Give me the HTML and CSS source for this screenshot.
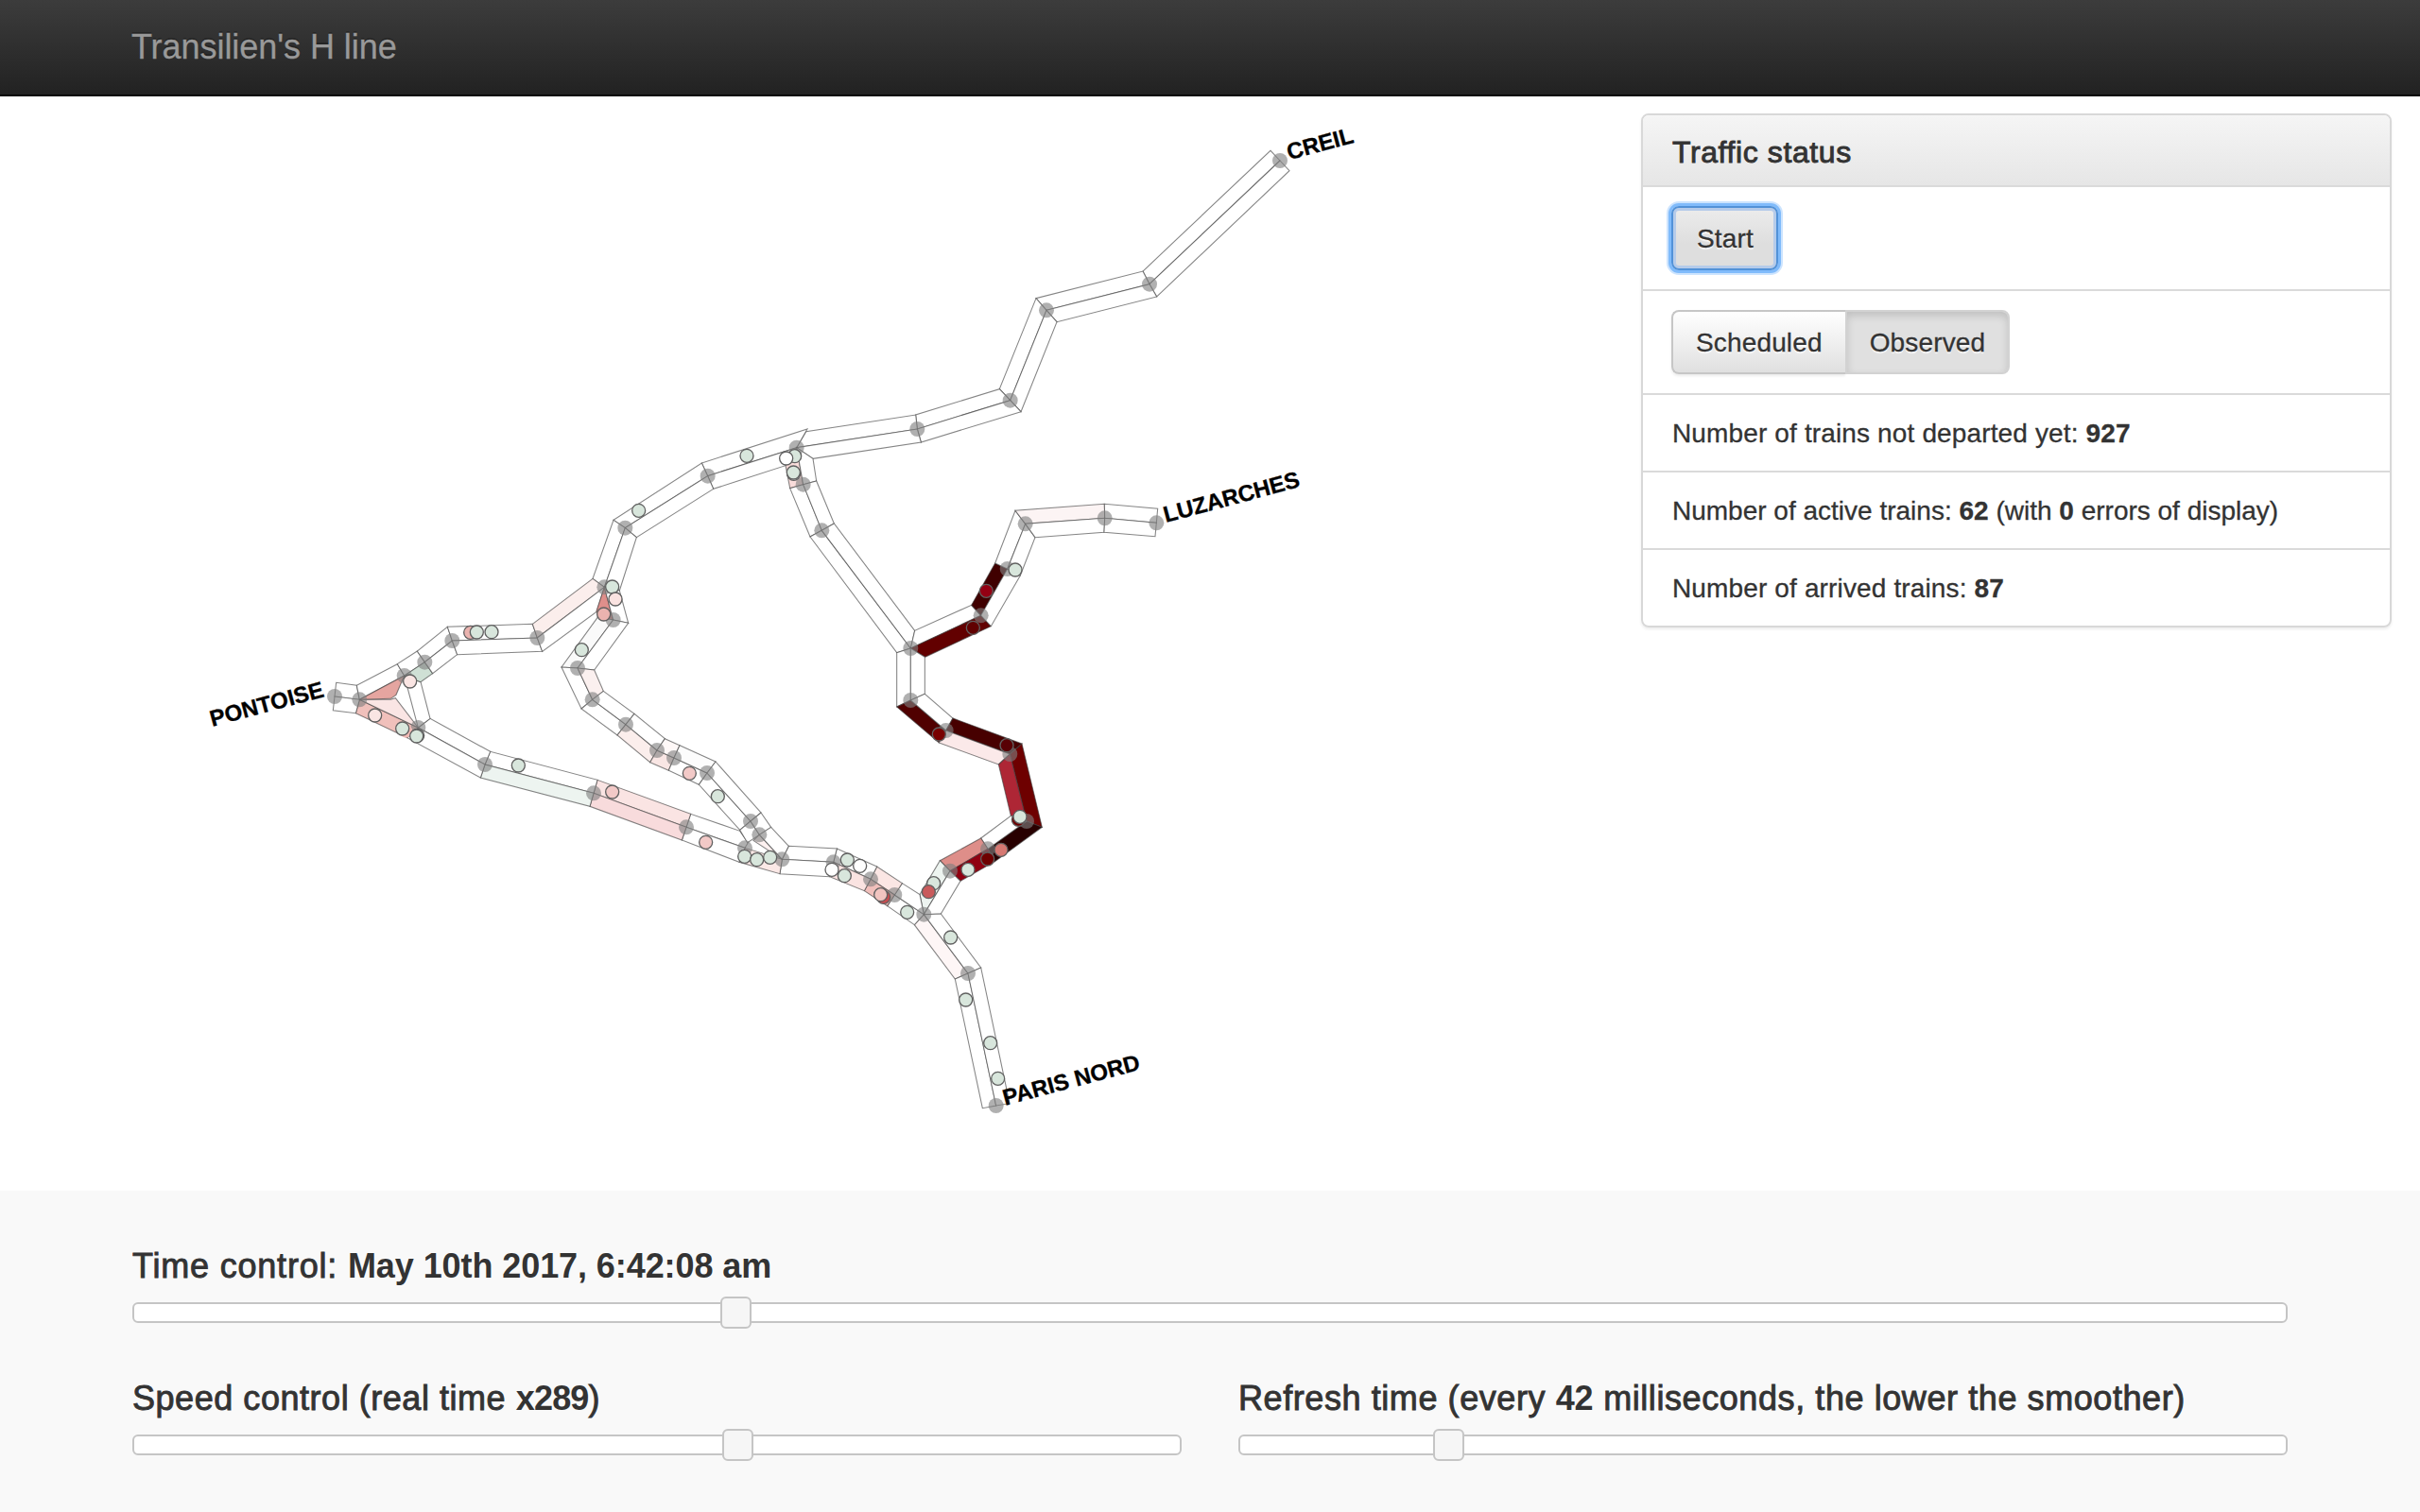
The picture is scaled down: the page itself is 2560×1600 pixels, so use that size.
FILE: index.html
```html
<!DOCTYPE html>
<html lang="en">
<head>
<meta charset="utf-8">
<title>Transilien's H line</title>
<link rel="stylesheet" href="styles.css">
</head>
<body>
<header class="navbar"><a class="brand">Transilien's H line</a></header>

<main class="content">
<svg class="map" viewBox="0 306 5208 3474">
  <!-- one polygon per direction between two stations -->
  <g class="sections">
    <polygon points="4062,510 4032,478 3627,861 3648,902"/>
    <polygon points="4062,510 4092,542 3671,942 3648,902"/>
    <polygon points="3648,902 3627,861 3288,947 3321,985"/>
    <polygon points="3648,902 3671,942 3354,1022 3321,985"/>
    <polygon points="3321,985 3288,947 3172,1235 3206,1271"/>
    <polygon points="3321,985 3354,1022 3240,1307 3206,1271"/>
    <polygon points="3206,1271 3172,1235 2906,1317 2911,1362"/>
    <polygon points="3206,1271 3240,1307 2923,1404 2911,1362"/>
    <polygon points="2911,1362 2906,1317 2558,1370 2528,1421"/>
    <polygon points="2911,1362 2923,1404 2580,1456 2528,1421"/>
    <polygon points="2528,1421 2562,1362 2227,1470 2246,1511"/>
    <polygon points="2528,1421 2493,1478 2264,1552 2246,1511"/>
    <polygon points="2246,1511 2227,1470 1947,1651 1984,1676"/>
    <polygon points="2246,1511 2264,1552 2020,1706 1984,1676"/>
    <polygon points="1984,1676 1947,1651 1881,1837 1918,1864"/>
    <polygon points="1984,1676 2020,1706 1966,1875 1918,1864"/>
    <polygon points="2528,1421 2493,1478 2507,1550 2549,1538" fill="#f9dcda"/>
    <polygon points="2528,1421 2580,1456 2591,1527 2549,1538"/>
    <polygon points="2549,1538 2507,1550 2571,1704 2608,1684"/>
    <polygon points="2549,1538 2591,1527 2647,1662 2608,1684"/>
    <polygon points="2608,1684 2571,1704 2846,2072 2890,2058"/>
    <polygon points="2608,1684 2647,1662 2903,2002 2890,2058"/>
    <polygon points="2890,2058 2903,2002 3083,1921 3113,1954"/>
    <polygon points="2890,2058 2936,2086 3145,1988 3113,1954" fill="#620000"/>
    <polygon points="3113,1954 3083,1921 3158,1788 3197,1806" fill="#400000"/>
    <polygon points="3113,1954 3145,1988 3238,1827 3197,1806"/>
    <polygon points="3197,1806 3158,1788 3222,1621 3254,1663"/>
    <polygon points="3197,1806 3238,1827 3285,1706 3254,1663"/>
    <polygon points="3254,1663 3222,1621 3505,1600 3506,1645" fill="#fcf4f4"/>
    <polygon points="3254,1663 3285,1706 3504,1690 3506,1645"/>
    <polygon points="3506,1645 3505,1600 3674,1615 3670,1660"/>
    <polygon points="3506,1645 3504,1690 3666,1703 3670,1660"/>
    <polygon points="2890,2058 2846,2072 2846,2244 2890,2223"/>
    <polygon points="2890,2058 2935,2086 2935,2203 2890,2223"/>
    <polygon points="2890,2223 2846,2244 2980,2358 3002,2319" fill="#500000"/>
    <polygon points="2890,2223 2935,2203 3024,2280 3002,2319"/>
    <polygon points="3002,2319 3024,2280 3243,2361 3205,2394" fill="#470000"/>
    <polygon points="3002,2319 2980,2358 3169,2427 3205,2394" fill="#fbe9e9"/>
    <polygon points="3205,2394 3243,2361 3307,2626 3258,2607" fill="#6e0000"/>
    <polygon points="3205,2394 3169,2427 3208,2590 3258,2607" fill="#ae2635"/>
    <polygon points="3258,2607 3307,2626 3157,2735 3135,2695" fill="#280000"/>
    <polygon points="3258,2607 3208,2590 3113,2661 3135,2695"/>
    <polygon points="3135,2695 3113,2661 2983,2732 3015,2765" fill="#de8e89"/>
    <polygon points="3135,2695 3157,2735 3048,2797 3015,2765" fill="#900011"/>
    <polygon points="3015,2765 2983,2732 2919,2840 2932,2903" fill="#edf4f0"/>
    <polygon points="3015,2765 3048,2797 2986,2901 2932,2903"/>
    <polygon points="2932,2903 2902,2936 3031,3108 3072,3090" fill="#fef6f6"/>
    <polygon points="2932,2903 2986,2901 3113,3072 3072,3090"/>
    <polygon points="3072,3090 3031,3108 3118,3518 3161,3510"/>
    <polygon points="3072,3090 3113,3072 3204,3503 3161,3510"/>
    <polygon points="2932,2903 2902,2936 2816,2876 2839,2841"/>
    <polygon points="2932,2903 2919,2840 2863,2804 2839,2841"/>
    <polygon points="2839,2841 2863,2804 2783,2751 2763,2791" fill="#fbe6e4"/>
    <polygon points="2839,2841 2816,2876 2743,2828 2763,2791" fill="#f1bfbb"/>
    <polygon points="2763,2791 2783,2751 2656,2694 2645,2737"/>
    <polygon points="2763,2791 2743,2828 2633,2783 2645,2737" fill="#fae3e1"/>
    <polygon points="2645,2737 2656,2694 2503,2686 2482,2728"/>
    <polygon points="2645,2737 2633,2783 2475,2774 2482,2728"/>
    <polygon points="2482,2728 2475,2774 2346,2737 2364,2692" fill="#fbe8e6"/>
    <polygon points="2364,2692 2374,2675 2348,2638 2192,2584 2178,2626"/>
    <polygon points="2364,2692 2346,2737 2164,2667 2178,2626"/>
    <polygon points="2178,2626 2192,2584 1896,2476 1884,2518" fill="#fae4e3"/>
    <polygon points="2178,2626 2164,2667 1872,2560 1884,2518" fill="#f8dbdc"/>
    <polygon points="1884,2518 1896,2476 1556,2386 1539,2427"/>
    <polygon points="1884,2518 1872,2560 1525,2469 1539,2427" fill="#edf4f0"/>
    <polygon points="1539,2427 1556,2386 1365,2281 1327,2310"/>
    <polygon points="1539,2427 1525,2469 1292,2342 1327,2310"/>
    <polygon points="1327,2310 1292,2342 1129,2264 1141,2221" fill="#f0c0bb"/>
    <polygon points="1283,2145 1335,2165 1365,2281 1327,2310"/>
    <polygon points="1327,2310 1255,2216 1240,2221 1141,2221" fill="#fae5e4"/>
    <polygon points="1141,2221 1132,2176 1067,2167 1062,2211"/>
    <polygon points="1141,2221 1129,2264 1057,2255 1062,2211"/>
    <polygon points="1141,2221 1132,2176 1261,2108 1283,2145"/>
    <polygon points="1141,2221 1240,2218 1257,2206 1283,2145" fill="#e5a5a0"/>
    <polygon points="1283,2145 1261,2108 1324,2067 1348,2102"/>
    <polygon points="1283,2145 1335,2165 1373,2138 1348,2102" fill="#cfe0d5"/>
    <polygon points="1348,2102 1324,2067 1420,1990 1435,2034"/>
    <polygon points="1348,2102 1373,2138 1451,2078 1435,2034"/>
    <polygon points="1435,2034 1420,1990 1690,1981 1705,2025"/>
    <polygon points="1435,2034 1451,2078 1721,2068 1705,2025"/>
    <polygon points="1705,2025 1690,1981 1881,1837 1918,1864" fill="#fbeeec"/>
    <polygon points="1705,2025 1721,2068 1893,1942 1918,1864"/>
    <polygon points="1918,1864 1893,1940 1898,1958 1946,1968" fill="#df8f8b"/>
    <polygon points="1918,1864 1966,1875 1994,1978 1946,1968"/>
    <polygon points="1946,1968 1898,1958 1782,2118 1833,2121" fill="#fafafa"/>
    <polygon points="1946,1968 1994,1978 1886,2127 1833,2121"/>
    <polygon points="1833,2121 1782,2118 1845,2250 1880,2221"/>
    <polygon points="1833,2121 1886,2127 1915,2194 1880,2221" fill="#fbf0ef"/>
    <polygon points="1880,2221 1845,2250 1959,2334 1986,2300"/>
    <polygon points="1880,2221 1915,2194 2013,2266 1986,2300"/>
    <polygon points="1986,2300 1959,2334 2063,2420 2085,2382" fill="#fbeeec"/>
    <polygon points="1986,2300 2013,2266 2110,2345 2085,2382"/>
    <polygon points="2085,2382 2063,2420 2122,2446 2139,2406" fill="#f9e6e4"/>
    <polygon points="2085,2382 2110,2345 2157,2366 2139,2406" fill="#fef8f7"/>
    <polygon points="2139,2406 2122,2446 2218,2491 2244,2454"/>
    <polygon points="2139,2406 2157,2366 2271,2418 2244,2454" fill="#fcfcfc"/>
    <polygon points="2244,2454 2218,2491 2348,2635 2382,2607"/>
    <polygon points="2244,2454 2271,2418 2415,2580 2382,2607"/>
    <polygon points="2382,2607 2348,2635 2372,2675 2410,2650"/>
    <polygon points="2382,2607 2415,2580 2447,2626 2410,2650"/>
    <polygon points="2410,2650 2391,2668 2482,2728" fill="#fdf1f0"/>
    <polygon points="2410,2650 2447,2626 2503,2686 2482,2728"/>
  </g>
  <g class="stations">
    <circle cx="4062" cy="510" r="24"/><circle cx="3648" cy="902" r="24"/><circle cx="3321" cy="985" r="24"/>
    <circle cx="3206" cy="1271" r="24"/><circle cx="2911" cy="1362" r="24"/><circle cx="2528" cy="1421" r="24"/>
    <circle cx="2246" cy="1511" r="24"/><circle cx="1984" cy="1676" r="24"/><circle cx="1918" cy="1864" r="24"/>
    <circle cx="2549" cy="1538" r="24"/><circle cx="2608" cy="1684" r="24"/><circle cx="2890" cy="2058" r="24"/>
    <circle cx="3113" cy="1954" r="24"/><circle cx="3197" cy="1806" r="24"/><circle cx="3254" cy="1663" r="24"/>
    <circle cx="3506" cy="1645" r="24"/><circle cx="3670" cy="1660" r="24"/><circle cx="2890" cy="2223" r="24"/>
    <circle cx="3002" cy="2319" r="24"/><circle cx="3205" cy="2394" r="24"/><circle cx="3258" cy="2607" r="24"/>
    <circle cx="3135" cy="2695" r="24"/><circle cx="3015" cy="2765" r="24"/><circle cx="2932" cy="2903" r="24"/>
    <circle cx="3072" cy="3090" r="24"/><circle cx="3161" cy="3510" r="24"/><circle cx="2839" cy="2841" r="24"/>
    <circle cx="2763" cy="2791" r="24"/><circle cx="2645" cy="2737" r="24"/><circle cx="2482" cy="2728" r="24"/>
    <circle cx="2364" cy="2692" r="24"/><circle cx="2178" cy="2626" r="24"/><circle cx="1884" cy="2518" r="24"/>
    <circle cx="1539" cy="2427" r="24"/><circle cx="1327" cy="2310" r="24"/><circle cx="1141" cy="2221" r="24"/>
    <circle cx="1062" cy="2211" r="24"/><circle cx="1283" cy="2145" r="24"/><circle cx="1348" cy="2102" r="24"/>
    <circle cx="1435" cy="2034" r="24"/><circle cx="1705" cy="2025" r="24"/><circle cx="1946" cy="1968" r="24"/>
    <circle cx="1833" cy="2121" r="24"/><circle cx="1880" cy="2221" r="24"/><circle cx="1986" cy="2300" r="24"/>
    <circle cx="2085" cy="2382" r="24"/><circle cx="2139" cy="2406" r="24"/><circle cx="2244" cy="2454" r="24"/>
    <circle cx="2382" cy="2607" r="24"/><circle cx="2410" cy="2650" r="24"/>
  </g>
  <g class="trains">
    <circle cx="2370" cy="1447" r="21"/><circle cx="2522" cy="1448" r="21"/>
    <circle cx="2495" cy="1455" r="21" fill="#fff"/><circle cx="2519" cy="1504" r="21" fill="#fff"/>
    <circle cx="2518" cy="1500" r="21"/><circle cx="3222" cy="1809" r="21"/>
    <circle cx="3130" cy="1876" r="21" fill="#940013"/><circle cx="3088" cy="1993" r="21" fill="#600000"/>
    <circle cx="2027" cy="1621" r="21"/><circle cx="1943" cy="1863" r="21"/>
    <circle cx="1953" cy="1902" r="21" fill="#fae3e1"/><circle cx="1916" cy="1950" r="21" fill="#eab3af"/>
    <circle cx="1846" cy="2063" r="21"/><circle cx="1493" cy="2008" r="21" fill="#eab3af"/>
    <circle cx="1513" cy="2007" r="21"/><circle cx="1560" cy="2006" r="21"/>
    <circle cx="1301" cy="2163" r="21" fill="#fae5e3"/><circle cx="1190" cy="2271" r="21" fill="#fae5e3"/>
    <circle cx="1288" cy="2321" r="21" fill="#f0b9b4" stroke="none"/><circle cx="1277" cy="2313" r="21"/>
    <circle cx="1325" cy="2335" r="21"/><circle cx="1322" cy="2337" r="21"/>
    <circle cx="1645" cy="2430" r="21"/><circle cx="1943" cy="2514" r="21" fill="#f2c9c7"/>
    <circle cx="2188" cy="2455" r="21" fill="#f2c9c7"/><circle cx="2278" cy="2528" r="21"/>
    <circle cx="2240" cy="2674" r="21" fill="#f2c9c7"/><circle cx="2363" cy="2719" r="21"/>
    <circle cx="2402" cy="2729" r="21"/><circle cx="2444" cy="2722" r="21"/>
    <circle cx="2689" cy="2730" r="21"/><circle cx="2729" cy="2749" r="21" fill="#fff"/>
    <circle cx="2640" cy="2761" r="21" fill="#fff"/><circle cx="2680" cy="2780" r="21"/>
    <circle cx="2804" cy="2848" r="21" fill="#c84c50"/><circle cx="2795" cy="2840" r="21" fill="#f1c4c0"/>
    <circle cx="2879" cy="2896" r="21"/><circle cx="2963" cy="2804" r="21"/>
    <circle cx="2947" cy="2831" r="21" fill="#c95b5c"/><circle cx="3017" cy="2976" r="21"/>
    <circle cx="3072" cy="2761" r="21"/><circle cx="3134" cy="2727" r="21" fill="#6e0000"/>
    <circle cx="3177" cy="2698" r="21" fill="#d67872"/><circle cx="3232" cy="2602" r="21" fill="#6e0000"/>
    <circle cx="3237" cy="2593" r="21"/><circle cx="3195" cy="2366" r="21" fill="#580004"/>
    <circle cx="2980" cy="2331" r="21" fill="#780000"/>
    <circle cx="3065" cy="3174" r="21"/><circle cx="3143" cy="3311" r="21"/><circle cx="3167" cy="3424" r="21"/>
  </g>
  <g class="labels">
    <text transform="translate(4091 508) rotate(-15)">CREIL</text>
    <text transform="translate(3700 1659) rotate(-15)">LUZARCHES</text>
    <text transform="translate(3190 3510) rotate(-15)">PARIS NORD</text>
    <text class="label-left" transform="translate(1032 2211) rotate(-15)">PONTOISE</text>
  </g>
</svg>

<section class="panel">
  <h2 class="panel-title">Traffic status</h2>
  <div class="panel-row"><button class="btn btn-start">Start</button></div>
  <div class="panel-row"><button class="btn btn-first">Scheduled</button><button class="btn btn-active">Observed</button></div>
  <div class="panel-row panel-text">Number of trains not departed yet: <b>927</b></div>
  <div class="panel-row panel-text panel-text-active">Number of active trains: <b>62</b> (with <b>0</b> errors of display)</div>
  <div class="panel-row panel-text">Number of arrived trains: <b>87</b></div>
</section>
</main>

<footer class="controls">
  <div class="control control-wide">
    <div class="control-label">Time control: <b>May 10th 2017, 6:42:08 am</b></div>
    <div class="slider"><span class="handle" style="left: 620px"></span></div>
  </div>
  <div class="control">
    <div class="control-label control-label-speed">Speed control (real time <b>x289</b>)</div>
    <div class="slider"><span class="handle" style="left: 622px"></span></div>
  </div>
  <div class="control">
    <div class="control-label control-label-refresh">Refresh time (every <b>42</b> milliseconds, the lower the smoother)</div>
    <div class="slider"><span class="handle" style="left: 204px"></span></div>
  </div>
</footer>
</body>
</html>
```
FILE: styles.css
```css
* { box-sizing: border-box; }

body {
  margin: 0;
  height: 1600px;
  overflow: hidden;
  display: flex;
  flex-direction: column;
  background: #fff;
  color: #333;
  font: 28px/40px "Liberation Sans", Arial, sans-serif;
}

.navbar {
  height: 102px;
  padding-left: 139px;
  border-bottom: 2px solid #060606;
  background: linear-gradient(#3c3c3c, #222);
}

.brand {
  display: block;
  font-size: 36px;
  line-height: 100px;
  letter-spacing: -.05px;
  color: #999;
  -webkit-text-stroke: .3px #999;
  text-shadow: 0 -2px 0 rgba(0, 0, 0, .25);
}

.content {
  display: flex;
  align-items: flex-start;
  height: 1158px;
}

.map { width: 1736px; height: 1158px; flex: none; }
.sections { fill: #fff; stroke: #3a3a3a; stroke-opacity: .62; stroke-width: 3.2; }
.stations { fill: #808080; fill-opacity: .62; }
.trains { fill: #d8e6dc; stroke: #606060; stroke-width: 4; }
.labels { fill: #000; stroke: #000; stroke-width: 1; font-size: 72px; font-weight: bold; }
.label-left { text-anchor: end; }

.panel {
  width: 794px;
  margin-top: 18px;
  border: 2px solid #d8d8d8;
  border-radius: 8px;
  box-shadow: 0 2px 3px rgba(0, 0, 0, .07);
}

.panel-title {
  margin: 0;
  height: 74px;
  padding: 0 31px;
  border-radius: 6px 6px 0 0;
  background: linear-gradient(#f5f5f5, #e6e6e6);
  font-size: 32px;
  font-weight: normal;
  line-height: 78px;
  letter-spacing: .6px;
  -webkit-text-stroke: .9px #333;
}

.panel-row {
  display: flex;
  white-space: pre;
  padding: 20px 30px;
  border-top: 2px solid #dadada;
}

.panel-text {
  padding: 21px 31px 19px;
  letter-spacing: .14px;
  -webkit-text-stroke: .3px #333;
}

.panel-text-active { letter-spacing: 0; }

.btn {
  height: 68px;
  padding: 1px 24px 0;
  border: 2px solid #c6c6c6;
  border-radius: 8px;
  background: linear-gradient(#fff, #e0e0e0);
  box-shadow: 0 2px 3px rgba(0, 0, 0, .08);
  color: #333;
  font: inherit;
  letter-spacing: .15px;
  -webkit-text-stroke: .3px #333;
  text-shadow: 0 2px 1px rgba(255, 255, 255, .75);
}

.btn-start {
  padding: 1px 24px 0 25px;
  border-color: #5292d8;
  background: linear-gradient(#ececec, #dedede 60%);
  box-shadow: inset 0 0 0 3px #b5cbea, 0 0 0 3px #80bbfb, 0 0 0 5px #cde4fe;
}

.btn-first {
  border-right: 0;
  border-radius: 8px 0 0 8px;
}

.btn-active {
  border-color: #d2d2d2;
  border-radius: 0 8px 8px 0;
  background: #e0e0e0;
  box-shadow: inset 0 4px 8px rgba(0, 0, 0, .15);
}

.controls {
  flex: 1;
  padding: 60px 140px 0;
  display: grid;
  grid-template-columns: 1110px 1110px;
  column-gap: 60px;
  row-gap: 60px;
  align-content: start;
  background: #f9f9f9;
}

.control-wide { grid-column: 1 / 3; }

.control-label {
  height: 40px;
  margin-bottom: 18px;
  font-size: 36px;
  letter-spacing: .8px;
  -webkit-text-stroke: .9px #333;
}

.control-label-speed { letter-spacing: .54px; }
.control-label-refresh { letter-spacing: .58px; }

.control-label b {
  letter-spacing: -.08px;
  -webkit-text-stroke: 0;
}

.control-label-speed b { letter-spacing: -.8px; }
.control-label-refresh b { letter-spacing: -.1px; }

.slider {
  position: relative;
  height: 22px;
  border: 2px solid #c5c5c5;
  border-radius: 6px;
  background: #fff;
}

.handle {
  position: absolute;
  top: -8px;
  width: 33px;
  height: 34px;
  border: 2px solid #c5c5c5;
  border-radius: 6px;
  background: #f6f6f6;
}
```
